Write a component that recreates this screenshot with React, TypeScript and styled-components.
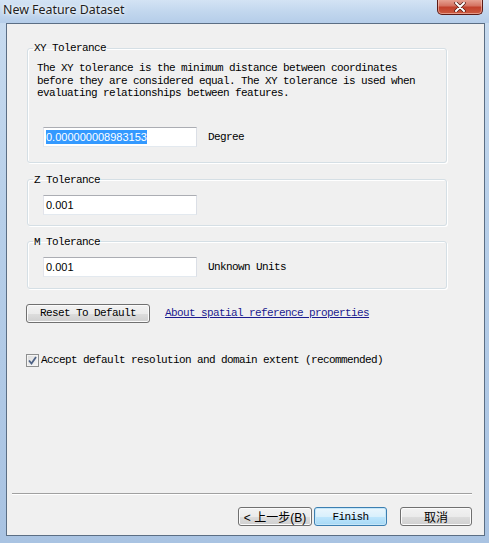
import React from "react";
import styled, { createGlobalStyle } from "styled-components";

const Global = createGlobalStyle`
  html, body { margin: 0; padding: 0; background: #ffffff; }
  * { box-sizing: border-box; }
`;

const MONO = `"Liberation Mono", "DejaVu Sans Mono", monospace`;
const CJK = `"Liberation Sans", "Noto Sans CJK SC", sans-serif`;

const Window = styled.div`
  width: 489px;
  height: 543px;
  display: flex;
  flex-direction: column;
  background: linear-gradient(180deg, #c9dcf0 0%, #b7cfe9 40%, #a9c3e2 100%);
  overflow: hidden;
`;

const TitleBar = styled.div`
  height: 23px;
  display: flex;
  align-items: flex-start;
  justify-content: space-between;
  padding-left: 3px;
  padding-right: 6px;
  background: linear-gradient(180deg, #d3e3f4 0%, #c2d7ee 50%, #b5cde9 100%);
`;

const Title = styled.span`
  font-family: "Noto Sans", "Open Sans", sans-serif;
  font-size: 12.4px;
  line-height: 16px;
  margin-top: 2px;
  color: #1e1e1e;
  text-shadow: 0 0 6px #ffffff, 0 0 3px #ffffff;
`;

const CloseButton = styled.div`
  width: 46px;
  height: 16px;
  margin-top: -1px;
  border: 1px solid #5c1a14;
  border-top: none;
  border-radius: 0 0 5px 5px;
  background: linear-gradient(180deg, #e9a899 0%, #d47362 45%, #c2412c 55%, #cc5a40 100%);
  box-shadow: inset 0 0 0 1px rgba(255, 220, 210, 0.5);
  display: flex;
  align-items: center;
  justify-content: center;
`;

const Middle = styled.div`
  flex: 1;
  display: flex;
  padding: 0 6px 7px 6px;
`;

const Client = styled.div`
  flex: 1;
  display: flex;
  flex-direction: column;
  background: #f0f0f0;
  border: 1px solid #5b6e84;
  padding: 18px 12px 9px 0;
`;

const Groups = styled.div`
  display: flex;
  flex-direction: column;
  padding-left: 20px;
`;

const Group = styled.fieldset<{ $top: number; $pt: number; $pb: number }>`
  width: 420px;
  margin: ${(p) => p.$top}px 0 0 0;
  padding: ${(p) => p.$pt}px 9px ${(p) => p.$pb}px 9px;
  border: 1px solid #d5dfe5;
  border-radius: 3px;
  box-shadow: inset 1px 1px 0 #ffffff, 1px 1px 0 #ffffff;
  min-width: 0;
`;

const Legend = styled.legend`
  font-family: ${MONO};
  font-size: 11px;
  letter-spacing: -0.6px;
  line-height: 12px;
  color: #000;
  padding: 0 1px;
  margin-left: -4px;
`;

const Description = styled.p`
  margin: 0;
  font-family: ${MONO};
  font-size: 11px;
  letter-spacing: -0.6px;
  line-height: 12.5px;
  color: #000;
`;

const FieldRow = styled.div<{ $top: number }>`
  display: flex;
  align-items: center;
  gap: 11px;
  margin-top: ${(p) => p.$top}px;
  padding-left: 6px;
`;

const TextBox = styled.div`
  width: 154px;
  height: 20px;
  background: #ffffff;
  border: 1px solid #e3e9ef;
  border-top-color: #abadb3;
  border-left-color: #e2e3ea;
  border-right-color: #dbdfe6;
  padding: 0 2px;
  display: flex;
  align-items: center;
  font-family: "Liberation Sans", Arial, sans-serif;
  font-size: 11px;
  color: #000;
`;

const Selection = styled.span`
  background: #3399ff;
  color: #ffffff;
  line-height: 14px;
`;

const UnitLabel = styled.span`
  font-family: ${MONO};
  font-size: 11px;
  letter-spacing: -0.6px;
  color: #000;
`;

const ActionRow = styled.div`
  display: flex;
  align-items: center;
  gap: 15px;
  margin-top: 15px;
  padding-left: 19px;
`;

const Button = styled.div<{ $w: number; $default?: boolean; $cjk?: boolean }>`
  width: ${(p) => p.$w}px;
  height: 19px;
  border: 1px solid ${(p) => (p.$default ? "#3c7fb1" : "#707070")};
  border-radius: 3px;
  background: ${(p) =>
    p.$default
      ? "linear-gradient(180deg, #eaf6fd 0%, #d9f0fc 50%, #bee6fd 51%, #a7d9f5 100%)"
      : "linear-gradient(180deg, #f2f2f2 0%, #ebebeb 50%, #dddddd 51%, #cfcfcf 100%)"};
  box-shadow: inset 0 0 0 1px ${(p) => (p.$default ? "#c5e6f8" : "#fbfbfb")};
  display: flex;
  align-items: center;
  justify-content: center;
  font-family: ${(p) => (p.$cjk ? CJK : MONO)};
  font-size: ${(p) => (p.$cjk ? "12px" : "11px")};
  letter-spacing: ${(p) => (p.$cjk ? "0" : "-0.6px")};
  color: #000;
`;

const Link = styled.span`
  font-family: ${MONO};
  font-size: 11px;
  letter-spacing: -0.6px;
  color: #1b1b8f;
  text-decoration: underline;
`;

const CheckRow = styled.div`
  display: flex;
  align-items: center;
  gap: 2px;
  margin-top: 31px;
  padding-left: 19px;
`;

const CheckBox = styled.div`
  width: 13px;
  height: 13px;
  border: 1px solid #8e8f8f;
  background: linear-gradient(135deg, #dcdcdc 0%, #f6f6f6 100%);
  box-shadow: inset 0 0 0 1px #f4f4f4;
  display: flex;
  align-items: center;
  justify-content: center;
`;

const CheckText = styled.span`
  font-family: ${MONO};
  font-size: 11px;
  letter-spacing: -0.6px;
  color: #000;
`;

const Footer = styled.div`
  margin-top: auto;
  display: flex;
  flex-direction: column;
`;

const Separator = styled.div`
  margin-left: 5px;
  width: 460px;
  height: 2px;
  border-top: 1px solid #a0a0a0;
  border-bottom: 1px solid #ffffff;
`;

const ButtonRow = styled.div`
  display: flex;
  justify-content: flex-end;
  align-items: center;
  margin-top: 12px;
`;

const Spacer = styled.div<{ $w: number }>`
  width: ${(p) => p.$w}px;
`;

export default function App() {
  return (
    <>
      <Global />
      <Window>
        <TitleBar>
          <Title>New Feature Dataset</Title>
          <CloseButton>
            <svg width="12" height="10" viewBox="0 0 12 10">
              <path d="M2 1 L10 9 M10 1 L2 9" stroke="#4a1a14" strokeWidth="3.4" strokeLinecap="round" />
              <path d="M2 1 L10 9 M10 1 L2 9" stroke="#ffffff" strokeWidth="2" strokeLinecap="round" />
            </svg>
          </CloseButton>
        </TitleBar>
        <Middle>
          <Client>
            <Groups>
              <Group $top={0} $pt={8} $pb={15}>
                <Legend>XY Tolerance</Legend>
                <Description>
                  The XY tolerance is the minimum distance between coordinates before they are
                  considered equal. The XY tolerance is used when evaluating relationships between
                  features.
                </Description>
                <FieldRow $top={27}>
                  <TextBox>
                    <Selection>0.000000008983153</Selection>
                  </TextBox>
                  <UnitLabel>Degree</UnitLabel>
                </FieldRow>
              </Group>
              <Group $top={11} $pt={9} $pb={10}>
                <Legend>Z Tolerance</Legend>
                <FieldRow $top={0}>
                  <TextBox>0.001</TextBox>
                </FieldRow>
              </Group>
              <Group $top={10} $pt={9} $pb={11}>
                <Legend>M Tolerance</Legend>
                <FieldRow $top={0}>
                  <TextBox>0.001</TextBox>
                  <UnitLabel>Unknown Units</UnitLabel>
                </FieldRow>
              </Group>
            </Groups>
            <ActionRow>
              <Button $w={124}>Reset To Default</Button>
              <Link>About spatial reference properties</Link>
            </ActionRow>
            <CheckRow>
              <CheckBox>
                <svg width="9" height="9" viewBox="0 0 9 9">
                  <path d="M1 4.5 L3.5 7.5 L8 1" fill="none" stroke="#4d6185" strokeWidth="1.8" />
                </svg>
              </CheckBox>
              <CheckText>Accept default resolution and domain extent (recommended)</CheckText>
            </CheckRow>
            <Footer>
              <Separator />
              <ButtonRow>
                <Button $w={74} $cjk>&lt; 上一步(B)</Button>
                <Spacer $w={2} />
                <Button $w={73} $default>Finish</Button>
                <Spacer $w={13} />
                <Button $w={72} $cjk>取消</Button>
              </ButtonRow>
            </Footer>
          </Client>
        </Middle>
      </Window>
    </>
  );
}
